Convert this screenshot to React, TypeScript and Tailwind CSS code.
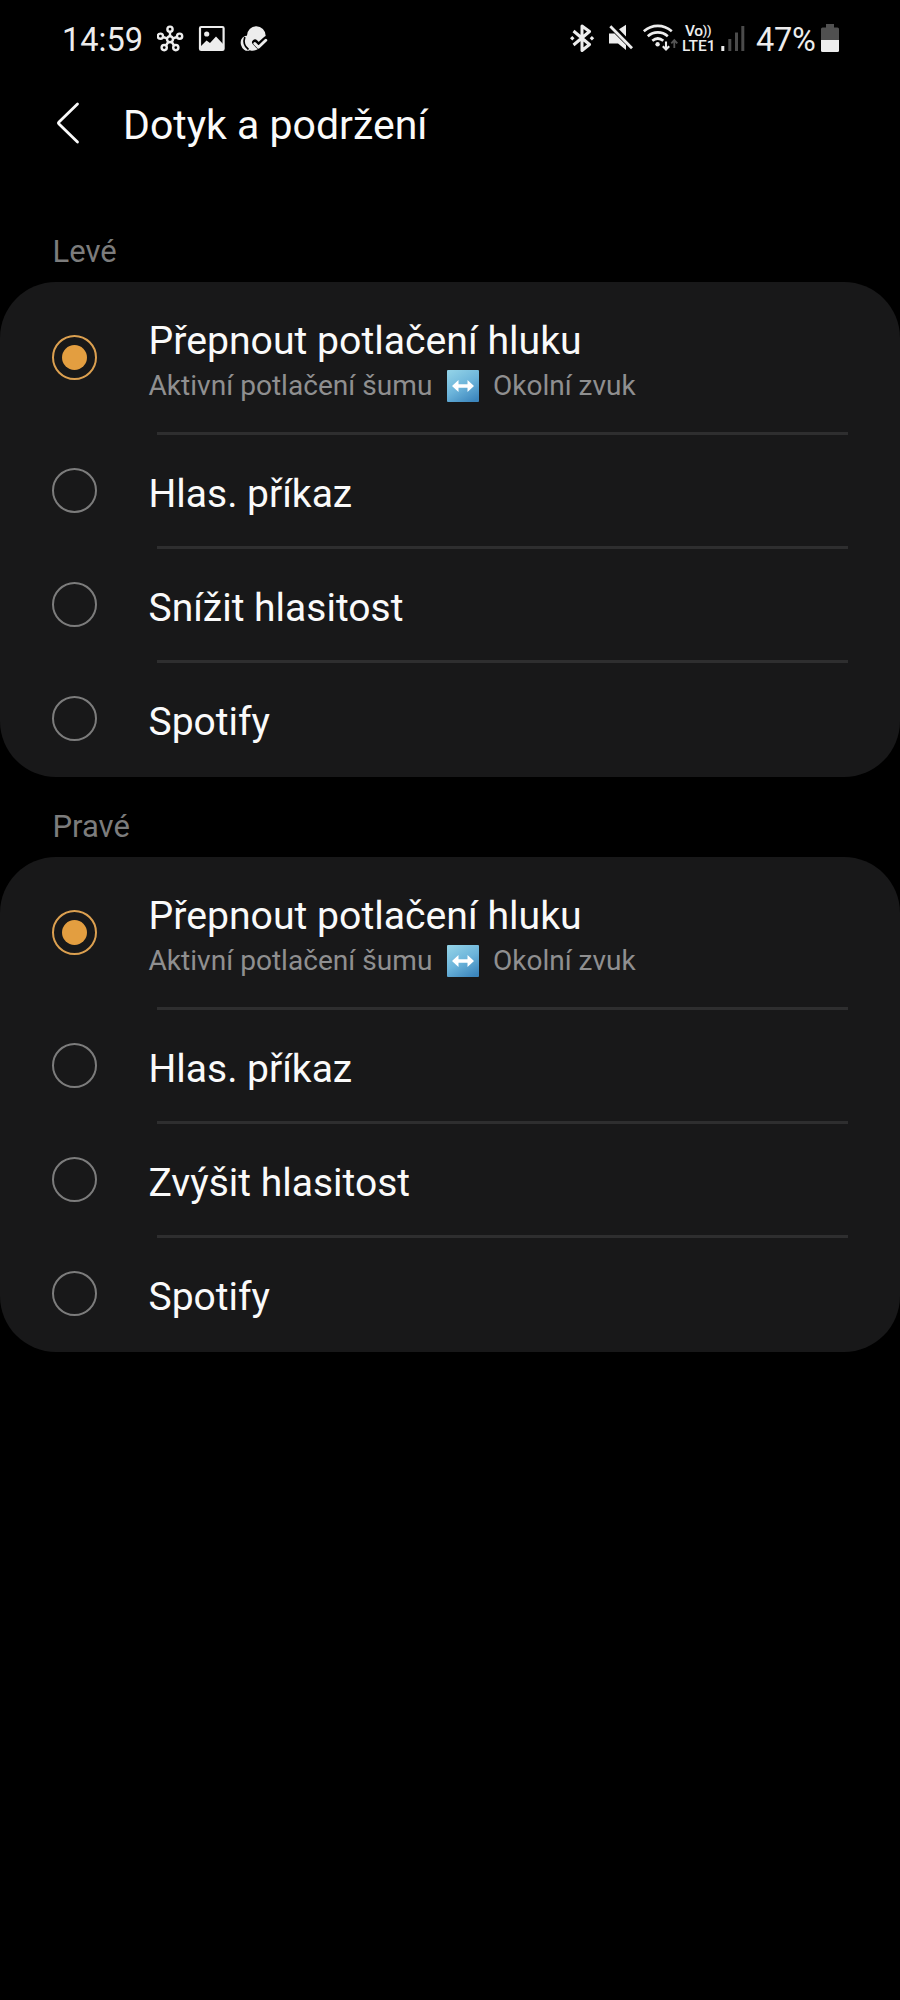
import type { ReactNode } from "react";

function Icon({ box, className, children }: { box: string; className: string; children: ReactNode }) {
  return (
    <svg viewBox={box} className={`shrink-0 ${className}`} fill="none" stroke="#ededed">
      {children}
    </svg>
  );
}

function StatusBar() {
  return (
    <div className="flex h-[76px] items-center pl-[62px] text-[#ededed]">
      <span className="w-[95px] pt-1 text-[32.500px] leading-9">14:59</span>
      <Icon box="157 24 27 28" className="h-[28px] w-[27px]">
        <g strokeWidth="2.400">
          <circle cx="170" cy="39.3" r="3" />
          <circle cx="170" cy="29.2" r="2.6" />
          <circle cx="160.4" cy="36.2" r="2.6" />
          <circle cx="179.6" cy="36.2" r="2.6" />
          <circle cx="164.2" cy="47.6" r="2.6" />
          <circle cx="175.8" cy="47.6" r="2.6" />
          <path d="M170 32v4M163 37l4 1.3M177 37l-4 1.3M165.900 45.500l2.200-3.200M174.100 45.500l-2.200-3.200" />
        </g>
      </Icon>
      <Icon box="198 24 28 28" className="ml-[14px] h-[28px] w-[28px]">
        <rect x="200" y="27" width="23.600" height="23" rx="1.200" strokeWidth="2.200" />
        <circle cx="206.700" cy="34" r="2.600" fill="#ededed" stroke="none" />
        <path d="M201 46l5.500-5.500 3.500 2.500 6-6.500 7.500 8V50h-22.500z" fill="#ededed" stroke="none" />
      </Icon>
      <Icon box="239 24 29 28" className="ml-[13px] h-[28px] w-[29px]">
        <g fill="#ededed" stroke="none">
          <ellipse cx="247" cy="43.300" rx="6.200" ry="7.600" transform="rotate(-15 247 43.300)" />
          <path d="M247 35.500l9.500 9 1.500 4.500c-2 1.500-5 2-7.500 1.500-4-1.500-5.500-9-3.500-15z" />
          <circle cx="256.300" cy="35.500" r="9.300" />
        </g>
        <path d="M244.800 37c-1.500 4.500-.3 9.500 3.700 12.500" stroke="#000" strokeWidth="1.700" />
        <path d="M255 42.300l3.500 3.700 7.800-7" stroke="#000" strokeWidth="5.800" strokeLinecap="round" strokeLinejoin="round" />
        <path d="M254.800 43.500l3.700 3.700 7.300-7" strokeWidth="2.900" strokeLinecap="round" strokeLinejoin="round" />
      </Icon>

      <Icon box="569 24 26 28" className="ml-[301px] h-[28px] w-[26px]">
        <path d="M573.500 31l16 13.500-7.500 6V26l7.500 5.500-16 13.500" strokeWidth="3" strokeLinejoin="round" />
        <path d="M570 38.200l2.300-2.200 2.200 2.200-2.200 2.200zM589.700 38.200l2.200-2.200 2.300 2.200-2.300 2.200z" fill="#ededed" stroke="none" />
      </Icon>
      <Icon box="608 24 26 28" className="ml-[13px] h-[28px] w-[26px]">
        <path d="M609 33.500h5.500l11.500 11.500v5l-8-6.500h-9zM619 29.300l7-4.500v11.700z" fill="#ededed" stroke="none" />
        <path d="M610.300 26.300l21.700 22" strokeWidth="2.800" />
      </Icon>
      <Icon box="642 24 37 28" className="ml-[8px] h-[28px] w-[37px]">
        <g strokeWidth="2.700">
          <path d="M643.800 31.200c8.500-7 19.500-7 28 0" />
          <path d="M647.800 36.200c6-5 14-5 20 0" />
          <path d="M652.300 40.700c3.500-2.800 7.500-2.800 11 0" />
        </g>
        <circle cx="657.600" cy="44.300" r="2.200" fill="#ededed" stroke="none" />
        <path d="M666 41.500v8M662.800 46.300l3.200 3.300 3.200-3.300" strokeWidth="2.100" />
        <path d="M674.300 48v-7.500M671.300 43.300l3-3.200 3 3.200" stroke="#555" strokeWidth="1.800" />
      </Icon>
      <div className="ml-[3px] flex w-[34px] flex-col pt-[2px] text-[15.500px] font-medium leading-[15px]">
        <span className="flex h-[15px] pl-[3px] tracking-[-0.300px]">
          Vo<span className="text-[13px] leading-[14px]">))</span>
        </span>
        <span className="h-[15px]">LTE1</span>
      </div>
      <Icon box="720 24 25 28" className="ml-[4px] h-[28px] w-[25px]">
        <g stroke="none" fill="#4b4b4b">
          <rect x="721.300" y="46" width="3" height="5" fill="#ededed" />
          <rect x="728.300" y="39" width="3" height="12" />
          <rect x="735" y="32.500" width="3" height="18.500" />
          <rect x="741.300" y="26" width="3" height="25" />
        </g>
      </Icon>
      <span className="ml-[11px] w-[65px] pt-1 text-[32.500px] leading-9 tracking-[-0.300px]">47%</span>
      <Icon box="821 24 18 28" className="h-[28px] w-[18px]">
        <g stroke="none">
          <path d="M821 40V29q0-1.500 1.500-1.500h3.500V24h8v3.500h3.500q1.500 0 1.500 1.500v11z" fill="#505050" />
          <path d="M821 40h18v10.500q0 1.500-1.500 1.500h-15q-1.500 0-1.500-1.500z" fill="#ededed" />
        </g>
      </Icon>
    </div>
  );
}

function Header() {
  return (
    <header className="flex h-[96px] items-center pl-[56px]">
      <svg viewBox="0 0 24 44" className="mb-[2px] h-[44px] w-[24px]" fill="none" stroke="#fafafa" strokeWidth="2.800" strokeLinecap="round" strokeLinejoin="round">
        <path d="M21.500 3L3 21q-1 1 0 2L21.500 41" />
      </svg>
      <h1 className="ml-[43px] pt-[2px] text-[41px] leading-[50px] whitespace-nowrap text-[#fafafa]">Dotyk a podržení</h1>
    </header>
  );
}

function Radio({ checked }: { checked?: boolean }) {
  return (
    <span
      className={`flex size-[45px] shrink-0 items-center justify-center rounded-full border-2 ${
        checked ? "border-[#dca050]" : "border-[#7c7c7c]"
      }`}
    >
      {checked && <span className="size-[25px] rounded-full bg-[#e39e40]" />}
    </span>
  );
}

function SwapEmoji() {
  return (
    <svg viewBox="0 0 32 32" className="h-[32px] w-[32px] shrink-0">
      <defs>
        <linearGradient id="tile" x1="0.2" y1="0" x2="0.8" y2="1">
          <stop offset="0" stopColor="#8fd0e6" />
          <stop offset="0.5" stopColor="#6cb4da" />
          <stop offset="1" stopColor="#3c86bd" />
        </linearGradient>
      </defs>
      <rect width="32" height="32" rx="1" fill="url(#tile)" />
      <path d="M5 16l6.500-6v4.200h9v-4.200l6.500 6-6.500 6v-4.200h-9v4.200z" fill="#fff" />
    </svg>
  );
}

function Divider() {
  return <div className="ml-[157px] mr-[52px] h-[3px] bg-[#2e2e2f]" />;
}

function Group({ options }: { options: string[] }) {
  return (
    <div className="h-[494.500px] rounded-[56px] bg-[#181819] text-[#fafafa]">
      <div className="flex h-[150px] items-start pl-[51.500px]">
        <div className="pt-[53px]">
          <Radio checked />
        </div>
        <div className="ml-[52px] flex flex-col pt-[37px] whitespace-nowrap">
          <span className="text-[39.200px] leading-[44px]">Přepnout potlačení hluku</span>
          <span className="mt-[6px] flex h-[34px] items-center text-[28.100px] leading-[34px] text-[#8f8f90]">
            <span className="w-[298.500px]">Aktivní potlačení šumu</span>
            <SwapEmoji />
            <span className="ml-[14px] text-[28px]">Okolní zvuk</span>
          </span>
        </div>
      </div>
      {options.map((label) => (
        <div key={label}>
          <Divider />
          <div className="flex h-[111px] items-center pl-[51.500px]">
            <Radio />
            <span className="ml-[52px] pt-[6px] text-[39px] leading-[44px] whitespace-nowrap">{label}</span>
          </div>
        </div>
      ))}
    </div>
  );
}

export default function App() {
  return (
    <main className="h-[2000px] w-[900px] overflow-hidden bg-black font-['Roboto',sans-serif]">
      <StatusBar />
      <Header />
      <h2 className="flex h-[110px] items-end pb-[10px] pl-[52.500px] text-[31px] leading-[40px] text-[#7c7c7c]">Levé</h2>
      <Group options={["Hlas. příkaz", "Snížit hlasitost", "Spotify"]} />
      <h2 className="flex h-[80.500px] items-end pb-[10px] pl-[52.500px] text-[31px] leading-[40px] text-[#7c7c7c]">Pravé</h2>
      <Group options={["Hlas. příkaz", "Zvýšit hlasitost", "Spotify"]} />
    </main>
  );
}
